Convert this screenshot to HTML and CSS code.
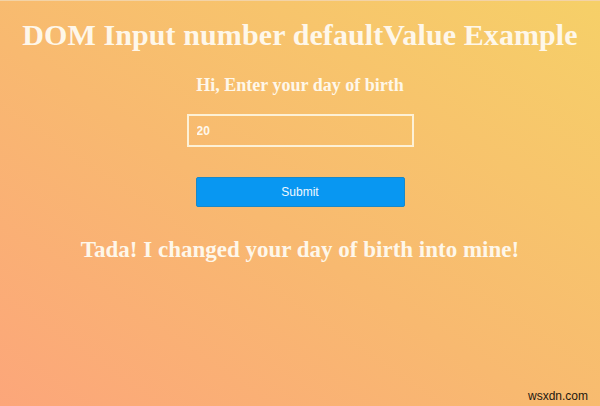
FILE: index.html
```html
<!DOCTYPE html>
<html>
<head>
<meta charset="utf-8">
<link rel="stylesheet" href="styles.css">
</head>
<body>
<div class="page">
  <h1 class="title">DOM Input number defaultValue Example</h1>
  <h3 class="prompt">Hi, Enter your day of birth</h3>
  <input class="field" type="number" value="20">
  <button class="submit" type="button">Submit</button>
  <h2 class="result">Tada! I changed your day of birth into mine!</h2>
  <div class="mark">wsxdn.com</div>
</div>
</body>
</html>
```
FILE: styles.css
```css
html, body {
  margin: 0;
  padding: 0;
  height: 100%;
}
body {
  background: linear-gradient(to top right, #fca67a 0%, #f8b970 45%, #f6d068 100%);
  border-top: 1px solid #f3d3a6;
  box-sizing: border-box;
  overflow: hidden;
}
.page {
  position: relative;
  height: 100%;
  display: flex;
  flex-direction: column;
  align-items: center;
  font-family: "Liberation Serif", "Times New Roman", serif;
  color: #fef7ea;
}
.title {
  margin: 17px 0 0;
  font-size: 30px;
  line-height: 34px;
  font-weight: bold;
  letter-spacing: 0.1px;
}
.prompt {
  margin: 23px 0 0;
  font-size: 18px;
  line-height: 21px;
  font-weight: bold;
}
.field {
  margin: 18px 0 0;
  width: 227px;
  height: 33px;
  box-sizing: border-box;
  border: 2px solid #fdf1d6;
  background: transparent;
  padding: 0 8px;
  font-family: "Liberation Sans", Arial, sans-serif;
  font-size: 12px;
  font-weight: bold;
  color: #fff8ec;
  outline: none;
  -moz-appearance: textfield;
}
.field::-webkit-inner-spin-button,
.field::-webkit-outer-spin-button {
  -webkit-appearance: none;
  margin: 0;
}
.submit {
  margin: 30px 0 0;
  width: 209px;
  height: 30px;
  border: 1px solid #1a88c8;
  border-radius: 2px;
  background: #0897f2;
  color: #eef8ff;
  font-family: "Liberation Sans", Arial, sans-serif;
  font-size: 12px;
  cursor: pointer;
}
.result {
  margin: 29px 0 0;
  font-size: 23px;
  line-height: 27px;
  font-weight: bold;
}
.mark {
  position: absolute;
  right: 12px;
  bottom: 3px;
  font-family: "Liberation Sans", Arial, sans-serif;
  font-size: 12px;
  color: #1e1810;
}
```
